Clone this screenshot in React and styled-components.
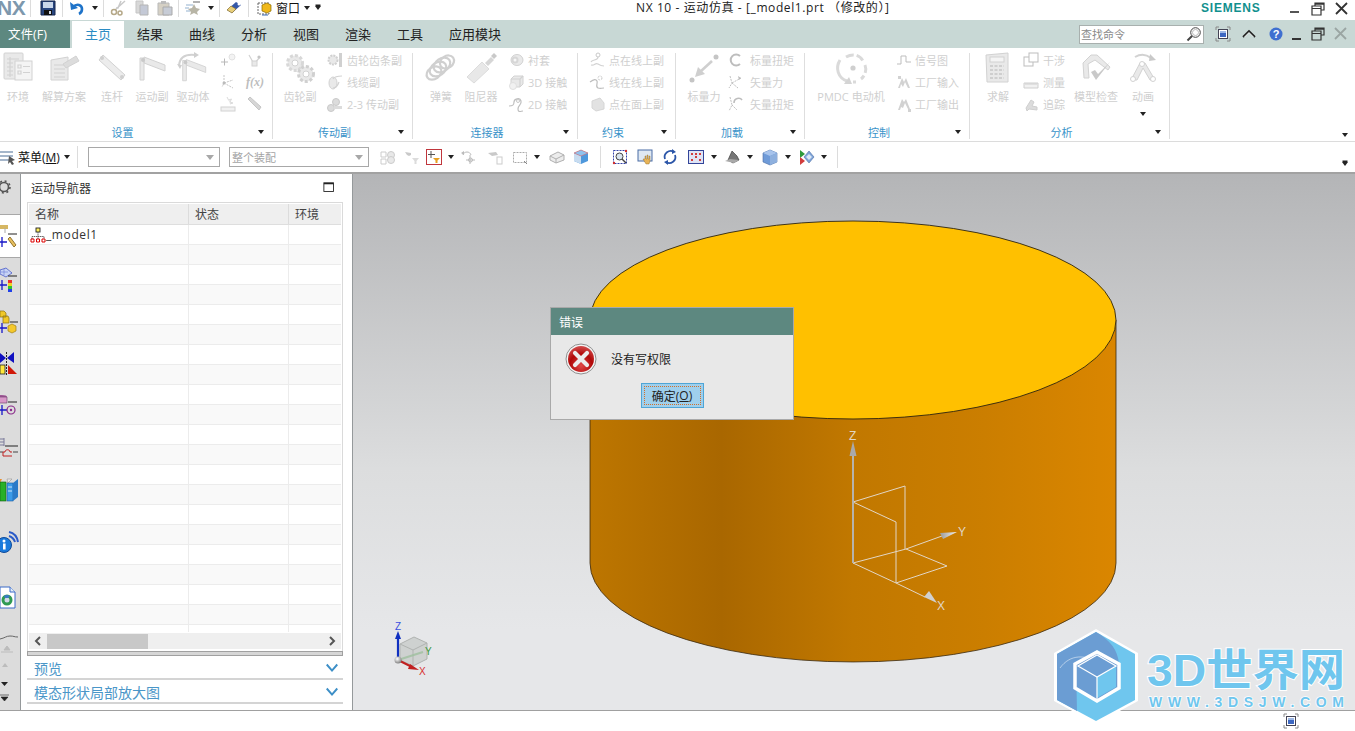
import React from "react";
import styled, { createGlobalStyle } from "styled-components";

const FONT = `"Open Sans", "Noto Sans CJK SC", "Noto Sans", sans-serif`;

const Global = createGlobalStyle`
  html, body { margin: 0; padding: 0; background: #fff; overflow: hidden; }
  * { box-sizing: border-box; }
  #root { width: 1355px; height: 731px; }
`;

/* ---------- icons ---------- */
const F = "#e9e9e9";
const S = "#d2d2d2";
const line = { fill: "none", stroke: S, strokeWidth: 1.2 };
const solid = { fill: F, stroke: S, strokeWidth: 1 };

const arch = (
  <>
    <path d="M4 28V6h4v22zM8 5l21 8v6L8 11z" {...solid} />
    <circle cx="7" cy="8" r="2" fill="#c9c9c9" />
  </>
);

const G = {
  env: (
    <>
      <rect x="2" y="1" width="19" height="26" rx="1" {...solid} />
      <path d="M5 7h12M5 11h6M5 15h6M5 19h6M5 23h6M8 5v20" {...line} />
      <rect x="13" y="9" width="17" height="19" fill="#f4f4f4" stroke={S} />
      <path d="M16 13h3v3h-3zM21 14.500h7M16 19h3v3h-3zM21 20.500h7" {...line} />
    </>
  ),
  solve: (
    <>
      <path d="M3 8l17-3v23l-17 0z" {...solid} />
      <path d="M6 13h11M6 17h11M6 21h11M6 25h11" {...line} />
      <path d="M15 12l13-8 3 5-13 7z" fill="#dcdcdc" stroke={S} />
    </>
  ),
  link: (
    <>
      <path d="M7 3l22 20-4 5L3 8z" fill="#ececec" stroke={S} />
      <circle cx="6" cy="6" r="2" fill="#cfcfcf" />
      <circle cx="26" cy="25" r="2" fill="#cfcfcf" />
    </>
  ),
  joint: arch,
  driver: (
    <>
      <g transform="translate(2 3) scale(.92)">{arch}</g>
      <path d="M2 13C3 5 9 2 18 3" {...line} strokeWidth="2" />
      <path d="M17 0l5 3-5 3zM0 12l5 1-2 4z" fill="#cfcfcf" />
    </>
  ),
  gears: (
    <>
      <circle cx="11" cy="11" r="7.500" fill={F} stroke="#d8d8d8" strokeWidth="3" strokeDasharray="3 2" />
      <circle cx="11" cy="11" r="3" fill="#fff" stroke={S} />
      <circle cx="22" cy="22" r="7.500" fill={F} stroke="#d0d0d0" strokeWidth="3" strokeDasharray="3 2" />
      <circle cx="22" cy="22" r="3" fill="#fff" stroke={S} />
    </>
  ),
  spring: (
    <g fill="none" stroke="#d0d0d0" strokeWidth="2.200">
      <ellipse cx="9" cy="21" rx="8" ry="6" transform="rotate(-35 9 21)" />
      <ellipse cx="13" cy="17" rx="9" ry="6.500" transform="rotate(-35 13 17)" />
      <ellipse cx="17" cy="13" rx="9" ry="6.500" transform="rotate(-35 17 13)" />
      <ellipse cx="22" cy="10" rx="7.500" ry="6" transform="rotate(-35 22 10)" />
    </g>
  ),
  damper: (
    <>
      <path d="M2 25L17 10l7 7L9 31z" fill="#e8e8e8" stroke="#dcdcdc" />
      <path d="M20 11l6-6 3 3-6 6z" fill="#d6d6d6" />
      <path d="M26 4l3-3 3 3-3 3z" fill="#c9c9c9" />
    </>
  ),
  force: (
    <>
      <circle cx="4" cy="28" r="2.500" fill="#c5c5c5" />
      <circle cx="28" cy="5" r="2.500" fill="#c5c5c5" />
      <path d="M24 9L12 20" stroke="#cfcfcf" strokeWidth="2.600" />
      <path d="M7 25l3-10 7 7z" fill="#cfcfcf" />
    </>
  ),
  pmdc: (
    <>
      <path d="M5 8C0 16 3 26 12 29" fill="none" stroke="#dadada" strokeWidth="3" />
      <path d="M9 32l5-7 3 7z" fill="#d4d4d4" />
      <path d="M11 5c7-4 14-2 17 4M30 13c2 5 0 11-4 14M21 30l-3 0" fill="none" stroke="#dadada" strokeWidth="3" strokeDasharray="8 3" />
      <circle cx="18" cy="16" r="2.600" fill="#cfcfcf" />
    </>
  ),
  calc: (
    <>
      <path d="M4 3l22-2v29H5z" {...solid} />
      <rect x="8" y="5" width="14" height="5" fill="#f4f4f4" stroke={S} />
      <path d="M8 14h14M8 18h14M8 22h14M8 26h14" stroke="#cfcfcf" strokeWidth="2" strokeDasharray="3 1.500" />
    </>
  ),
  check: (
    <>
      <path d="M3 11l8-8 6 0 13 12-2 3L15 8 8 12l1 14H4z" {...solid} />
      <path d="M11 20l5 8 14-18-12 12-3-4z" fill="#c9c9c9" />
    </>
  ),
  anim: (
    <>
      <path d="M4 28l9-17 5 0 10 17h-5l-7-12-6 12z" {...solid} />
      <circle cx="6" cy="27" r="2.500" fill="#fff" stroke={S} />
      <circle cx="26" cy="27" r="2.500" fill="#fff" stroke={S} />
      <circle cx="15" cy="12" r="2.500" fill="#fff" stroke={S} />
      <path d="M8 5c5-3 11-3 16 1" {...line} strokeWidth="2" />
      <path d="M23 2l6 6-7 1z" fill="#c9c9c9" />
    </>
  ),
};

const g = {
  plusBulb: (
    <>
      <path d="M1 10h7M4.500 6.500v7" stroke="#b9b9b9" strokeWidth="1" />
      <circle cx="12" cy="5" r="3" fill="#f3f3f3" stroke="#e2e2e2" />
    </>
  ),
  nodes: (
    <>
      <path d="M3 3l5 9 6-7" {...line} />
      <rect x="6" y="9" width="5" height="5" {...solid} />
      <circle cx="13" cy="5" r="1.600" fill="#c5c5c5" />
    </>
  ),
  axes: (
    <>
      <path d="M4 1v8l-2 4M4 9l9-3M4 9l9 5" fill="none" stroke="#c5c5c5" strokeDasharray="2 1" />
      <circle cx="4" cy="9" r="1.500" fill="#bbb" />
    </>
  ),
  fx: (
    <text x="0" y="12" fontFamily="'Liberation Serif', serif" fontStyle="italic" fontWeight="700" fontSize="12" fill="#bdbdbd">f(x)</text>
  ),
  ruler: (
    <>
      <path d="M7 1l1.500 3 3-1-1.500 3 3 1-3 1" fill="#ededed" stroke="#dcdcdc" />
      <rect x="1" y="11" width="14" height="4" fill="#f1f1f1" stroke={S} />
    </>
  ),
  rod: <path d="M2 3l2-2 11 10-2 3z" fill="#d6d6d6" stroke="#c5c5c5" />,
  rack: (
    <>
      <circle cx="6" cy="8" r="4.500" fill={F} stroke="#d0d0d0" strokeWidth="2" strokeDasharray="2 1" />
      <rect x="12" y="1" width="3" height="14" fill="#d0d0d0" />
    </>
  ),
  cable: (
    <>
      <ellipse cx="6" cy="9" rx="4" ry="6" fill={F} stroke={S} />
      <path d="M6 5C8 2 12 2 15 2M6 14c3 0 5-3 6-6" {...line} />
    </>
  ),
  couple: (
    <>
      <circle cx="4" cy="12" r="3.500" fill="#dcdcdc" stroke="#c9c9c9" />
      <circle cx="9" cy="6" r="3.500" fill="#dcdcdc" stroke="#c9c9c9" />
      <rect x="7" y="10" width="8" height="3" fill="#dcdcdc" />
    </>
  ),
  bushing: (
    <>
      <ellipse cx="9" cy="8" rx="6" ry="5.500" fill={F} stroke={S} />
      <circle cx="7" cy="8" r="3.500" fill="#d6d6d6" />
      <circle cx="7" cy="8" r="1.500" fill="#f7f7f7" />
    </>
  ),
  c3d: (
    <>
      <path d="M3 5l3-3h9v8l-3 3H3z" {...solid} />
      <path d="M3 5h9v8M12 5l3-3" {...line} />
      <circle cx="5" cy="12" r="3.500" fill="#f1f1f1" stroke="#e0e0e0" />
    </>
  ),
  c2d: (
    <>
      <path d="M1 10c4 0 5-1 5-4s6-5 7-1-3 4-3 8 3 2 5 2" {...line} stroke="#bdbdbd" />
      <circle cx="10" cy="5" r="1.500" fill="none" stroke="#c9c9c9" />
    </>
  ),
  ptLine: (
    <>
      <circle cx="9" cy="3" r="2" fill="none" stroke="#c9c9c9" />
      <path d="M9 5c0 4-6 2-7 5M2 13c4 1 4-3 7-1s4 2 6 2" {...line} />
    </>
  ),
  lineLine: (
    <>
      <circle cx="11" cy="4" r="2" fill="none" stroke="#c9c9c9" strokeDasharray="2 1" />
      <path d="M1 8c4-3 6-3 7-1s-2 6 1 7 3 0 6 0" {...line} stroke="#bdbdbd" />
    </>
  ),
  ptFace: <path d="M3 5l8-3 4 5v6l-8 2-4-3z" fill="#e2e2e2" stroke="#d6d6d6" />,
  scalarT: <path d="M13 4A5.500 5.500 0 1 0 13 12" fill="none" stroke="#bdbdbd" strokeWidth="2" />,
  vecF: (
    <>
      <path d="M3 2l2 7-3 5M5 9l9-5M5 9l6 5" fill="none" stroke="#c0c0c0" strokeDasharray="2 1" />
      <path d="M11 2l3 2-2 2z" fill="#bbb" />
    </>
  ),
  vecT: (
    <>
      <path d="M3 1l2 8-3 6M5 9l5 5" fill="none" stroke="#c0c0c0" strokeDasharray="2 1" />
      <path d="M7 7c0-5 6-6 8-3" {...line} stroke="#bdbdbd" strokeWidth="1.600" />
    </>
  ),
  signal: <path d="M1 12h4V4h5v6h5" fill="none" stroke="#bdbdbd" />,
  plantIn: <path d="M2 14l4-10 2 4 2-4 4 10h-2l-3-6-2 5-2-3-1 4zM2 2h3v3H2z" fill="#d2d2d2" />,
  plantOut: <path d="M2 14l4-11 2 3 2-3 4 10h-2l-3-6-2 5-2-1-1 3zM12 13h3v3h-3z" fill="#d2d2d2" />,
  overlap: (
    <>
      <rect x="1" y="5" width="9" height="9" fill="#fff" stroke="#bdbdbd" />
      <rect x="6" y="1" width="9" height="9" fill="#fff" stroke="#bdbdbd" />
    </>
  ),
  measure: <path d="M1 9h14v5H1zM3 9v2M5 9v2M7 9v2M9 9v2M11 9v2M13 9v2" fill="#f1f1f1" stroke="#cfcfcf" />,
  trace: <path d="M3 12l5-8 3 2-2 4 5 1v3l-8-1-2 2z" fill="#dcdcdc" stroke="#cfcfcf" />,
  /* title bar */
  save: (
    <>
      <path d="M1 1h14v14H1z" fill="#27457f" stroke="#16264d" />
      <path d="M3 2h10v6H3z" fill="#c9d7ea" />
      <rect x="4" y="10" width="8" height="5" fill="#111" />
      <rect x="9" y="11" width="2" height="3" fill="#cfd8e6" />
    </>
  ),
  undo: (
    <>
      <path d="M4 7c4-4 9-2 9 2 0 2-1 4-3 5" fill="none" stroke="#1e73c9" strokeWidth="2.600" />
      <path d="M1 2l1 8 7-2z" fill="#1e73c9" />
    </>
  ),
  cut: (
    <>
      <path d="M15 1L5 10M11 1L8 8l-2 0" stroke="#c9c9c9" strokeWidth="1.500" fill="none" />
      <circle cx="4" cy="12" r="2.500" fill="none" stroke="#b5a888" strokeWidth="1.500" />
      <circle cx="10" cy="13" r="2" fill="none" stroke="#b5a888" strokeWidth="1.500" />
    </>
  ),
  copy: (
    <>
      <path d="M2 1h7v12H2z" fill="#d8d8d8" stroke="#c5c5c5" />
      <path d="M6 5h8v10H6z" fill="#c4c9d6" stroke="#b5b5b5" />
    </>
  ),
  paste: (
    <>
      <path d="M1 3h11v12H1z" fill="#d5d0c4" stroke="#b9b9b9" />
      <rect x="4" y="1" width="5" height="3" fill="#bbb" />
      <path d="M6 7h9v8H6z" fill="#c7ccd6" stroke="#aaa" />
    </>
  ),
  star: (
    <>
      <path d="M9 4l2 4 4 1-3 3 1 3-4-2-4 2 1-3-3-3 4-1z" fill="#b8b5a6" />
      <path d="M1 5h7M0 8h4M1 11h4" stroke="#b8cbe0" strokeWidth="1.500" />
      <path d="M8 2h7" stroke="#999" strokeWidth="1.500" />
    </>
  ),
  eraser: (
    <>
      <path d="M1 10l9-8 5 3-9 8z" fill="#3558a8" />
      <path d="M1 10l4-4 5 3-4 4z" fill="#e8cf7a" stroke="#8a6a20" strokeWidth=".6" />
      <circle cx="13" cy="4" r="1.500" fill="#fff" />
    </>
  ),
  wnd: (
    <>
      <path d="M2 3h11v11H2z" fill="#fff" stroke="#666" strokeDasharray="2 1" />
      <path d="M6 5l5-2 4 2v6l-4 2-5-2z" fill="#f0b81a" stroke="#8a6a00" strokeWidth=".7" />
      <path d="M6 15h6" stroke="#3a6ab8" />
    </>
  ),
  /* toolbar */
  menu: (
    <>
      <path d="M0 3h13M0 7h13M0 11h10" stroke="#4c6e96" strokeWidth="1.200" />
      <path d="M9 7l6 4-3 1 2 3-2 1-2-3-2 2z" fill="#555" />
    </>
  ),
  asm: (
    <>
      <path d="M1 3h5v5H1zM1 10h5v5H1z" fill="none" stroke="#ccc" />
      <circle cx="11" cy="6" r="3.500" fill="#e8e8e8" stroke="#ccc" />
      <circle cx="11" cy="11" r="3.500" fill="#e8e8e8" stroke="#ccc" />
    </>
  ),
  wrench: (
    <>
      <path d="M1 3l6 1v2l-2 1-2-1z" fill="#c9c9c9" />
      <path d="M8 9h7l-2.500 3v3h-2v-3z" fill="#dcdcdc" />
    </>
  ),
  redFilter: (
    <>
      <rect x=".5" y=".5" width="15" height="15" fill="#fff" stroke="#c0363c" />
      <path d="M5 2v7M2 5.500h7" stroke="#555" />
      <path d="M7 9h7l-2.500 2.500V14h-2v-2.500z" fill="#e8a020" />
    </>
  ),
  rot: (
    <>
      <path d="M3 6c1-4 7-4 8 0" fill="none" stroke="#bbb" />
      <path d="M1 4l3-2v4z" fill="#bbb" />
      <path d="M10 6v9M6 11h9" stroke="#bbb" />
      <circle cx="10.500" cy="11" r="2" fill="none" stroke="#bbb" />
    </>
  ),
  chain: (
    <>
      <path d="M1 4l8-1 2 3-6 1z" fill="#c9c9c9" />
      <rect x="10" y="8" width="5" height="7" fill="none" stroke="#ccc" />
    </>
  ),
  marquee: (
    <>
      <rect x="1.500" y="3.500" width="13" height="10" fill="none" stroke="#aaa" strokeDasharray="2 1" />
      <path d="M12 12l3 3" stroke="#888" />
    </>
  ),
  wire: (
    <>
      <path d="M1 7l8-4 6 3v5l-8 3-6-3z" fill="#ececec" stroke="#b0b0b0" />
      <path d="M1 7l6 3 8-4M7 10v4" fill="none" stroke="#b0b0b0" />
    </>
  ),
  cubeSel: (
    <>
      <path d="M1 4l7-3 7 3v8l-7 3-7-3z" fill="#4e98dc" />
      <path d="M1 4l7 3v8l-7-3z" fill="#c8dcf0" />
      <path d="M8 7l7-3-7-3-7 3z" fill="#8fc2ee" stroke="#e06a6a" strokeWidth=".6" />
    </>
  ),
  zoomBox: (
    <>
      <rect x="1.500" y="1.500" width="13" height="13" fill="#fff" stroke="#3040a8" strokeDasharray="2 1" />
      <circle cx="7.500" cy="7.500" r="3.500" fill="#d8e4f0" stroke="#444" />
      <path d="M10 10l4 4" stroke="#444" strokeWidth="1.500" />
      <circle cx="14" cy="2" r="1.200" fill="#d03030" />
      <circle cx="2" cy="14" r="1.200" fill="#d03030" />
    </>
  ),
  pan: (
    <>
      <rect x="1" y="1" width="14" height="11" fill="#dfe8f2" stroke="#4a6da5" />
      <path d="M9 15l-3-5 2 0V7h1v3h1V6h1v4h1V7h1v5l-1 3z" fill="#e8b458" stroke="#8a6420" strokeWidth=".4" />
    </>
  ),
  rotate: (
    <>
      <path d="M3 10A6 6 0 0 1 12 3" fill="none" stroke="#2c56a8" strokeWidth="1.800" />
      <path d="M13 6A6 6 0 0 1 4 13" fill="none" stroke="#2c56a8" strokeWidth="1.800" />
      <path d="M10 0l4 3-4 2zM6 16l-4-3 4-2z" fill="#2c56a8" />
    </>
  ),
  fit: (
    <>
      <rect x=".5" y="1.500" width="15" height="13" fill="#dfe4f5" stroke="#33459a" />
      <path d="M3 4h2v2H3zM7 4h2v2H7zM11 4h2v2h-2zM3 10h2v2H3zM7 7h2v2H7zM11 10h2v2h-2z" fill="#d23c3c" />
    </>
  ),
  shade: (
    <>
      <path d="M4 11l4-9 5 5 2 4-6 3z" fill="#777" stroke="#333" strokeWidth=".6" />
      <path d="M1 12l5-2 9 1-5 3z" fill="#a9a9a9" />
    </>
  ),
  cubeBlue: (
    <>
      <path d="M1 4l7-3 7 3v9l-7 3-7-3z" fill="#6f9bd8" stroke="#4a6da5" strokeWidth=".6" />
      <path d="M1 4l7 3 7-3-7-3z" fill="#a8c4ec" />
      <path d="M8 7v9l7-3V4z" fill="#8eb0de" />
    </>
  ),
  views: (
    <>
      <path d="M2 1l5 4-5 4z" fill="#2f9a3c" />
      <path d="M2 8l5 4-5 4z" fill="#d23c3c" />
      <path d="M6 8l5-6 5 6-5 6z" fill="#7fa4d8" stroke="#4a6da5" strokeWidth=".6" />
      <path d="M8 8l3-3 3 3-3 3z" fill="#dce8f6" />
    </>
  ),
  /* misc */
  loupe: (
    <>
      <circle cx="9.500" cy="6.500" r="4.800" fill="#fff" stroke="#444" />
      <circle cx="9.500" cy="6.500" r="3" fill="none" stroke="#bbb" />
      <path d="M6 10l-4.500 4.500" stroke="#444" strokeWidth="2" />
    </>
  ),
  frame: (
    <>
      <path d="M1 4V1h3M12 1h3v3M15 12v3h-3M4 15H1v-3" fill="none" stroke="#888" />
      <rect x="3.500" y="3.500" width="9" height="9" fill="#fff" stroke="#445" />
      <rect x="5" y="5" width="6" height="6" fill="#3d68c2" />
      <rect x="5" y="5" width="6" height="2" fill="#9db8e6" />
    </>
  ),
  collapse: (
    <>
      <path d="M2 11l6-6 6 6" fill="none" stroke="#222" strokeWidth="1.800" />
      <path d="M3.500 11L8 6.500 12.500 11" fill="none" stroke="#fff" strokeWidth=".8" />
    </>
  ),
  min: <rect x="4" y="12" width="9" height="2" fill="#333" />,
  minGrey: <rect x="4" y="10" width="9" height="2" fill="#555" />,
  restore: (
    <path d="M5 5V2h9v7h-3M2 5h9v9H2zM2 7.500h9M5 3.200h9" fill="none" stroke="#333" strokeWidth="1.200" />
  ),
  close: <path d="M2 2l11 11M13 2L2 13" stroke="#333" strokeWidth="1.800" />,
  closeOff: <path d="M2 2l11 11M13 2L2 13" stroke="#9aa5a3" strokeWidth="1.800" />,
  maximize: (
    <>
      <rect x="1" y="2" width="11" height="10" fill="#fff" stroke="#222" />
      <path d="M1 3h11" stroke="#222" strokeWidth="1.500" />
    </>
  ),
  mech: (
    <>
      <rect x="6" y="1" width="4" height="4" fill="#ffef5a" stroke="#222" strokeWidth=".9" />
      <path d="M8 5v4M2 12V9.500h12V12M8 9v3" fill="none" stroke="#555" strokeWidth=".9" strokeDasharray="1.500 .6" />
      <path d="M1 12h3v3H1zM6.500 12h3v3h-3zM12 12h3v3h-3z" fill="#fff" stroke="#d00" />
    </>
  ),
  chev: <path d="M2 4l6 7 6-7" fill="none" stroke="#3d8fc7" strokeWidth="2.200" />,
};

const Svg = styled.svg`
  display: block;
  flex: none;
  overflow: visible;
  margin-left: ${(p) => p.$ml || 0}px;
  margin-top: ${(p) => p.$mt || 0}px;
`;

const Big = ({ n }) => (
  <Svg width="32" height="32" viewBox="0 0 32 32">{G[n]}</Svg>
);
const Ico = ({ n, ml, size = 16 }) => (
  <Svg width={size} height={size} viewBox="0 0 16 16" $ml={ml}>{g[n]}</Svg>
);

/* ---------- title row ---------- */
const Page = styled.div`
  width: 1355px;
  height: 731px;
  display: flex;
  flex-direction: column;
  font-family: ${FONT};
  font-size: 12px;
  color: #222;
  background: #fff;
  overflow: hidden;
`;
const TitleRow = styled.div`
  height: 20px;
  flex: none;
  display: flex;
  align-items: center;
`;
const Quick = styled.div`
  width: 636px;
  flex: none;
  height: 15px;
  align-self: flex-start;
  display: flex;
  align-items: center;
`;
const NxLogo = styled.div`
  width: 30px;
  height: 15px;
  flex: none;
  overflow: hidden;
  font: 700 21px/15px "Liberation Sans", sans-serif;
  color: #7d98ad;
  letter-spacing: -0.5px;
  text-indent: -3px;
`;
const VSep = styled.i`
  flex: none;
  width: 1px;
  height: ${(p) => p.$h || 18}px;
  background: #dcdcdc;
  margin-left: ${(p) => p.$ml || 0}px;
`;
const Caret = styled.i`
  flex: none;
  width: 0;
  height: 0;
  border-left: 3px solid transparent;
  border-right: 3px solid transparent;
  border-top: 4px solid #222;
  margin-left: ${(p) => p.$ml || 0}px;
  margin-right: 1px;
`;
const MenuCaret = styled(Caret)`
  box-shadow: 0 -2px 0 -0.5px #222;
`;
const QuickText = styled.span`
  margin-left: ${(p) => p.$ml || 0}px;
  font-size: 12px;
  color: #111;
`;
const Title = styled.div`
  font-size: 12px;
  color: #222;
  white-space: pre;
  margin-top: -6px;
  letter-spacing: 0.6px;
`;
const Siemens = styled.div`
  margin-left: auto;
  width: 62px;
  font: 700 12px "Liberation Sans", sans-serif;
  color: #11908e;
  letter-spacing: 0.8px;
  margin-top: -5px;
  white-space: nowrap;
`;
const WinControls = styled.div`
  display: flex;
  align-items: center;
  width: 92px;
  margin-top: -2px;
`;

/* ---------- tabs ---------- */
const TabBar = styled.div`
  height: 28px;
  flex: none;
  display: flex;
  align-items: stretch;
  background: #c8d8d5;
`;
const FileTab = styled.div`
  width: 70px;
  background: #5d8880;
  color: #fff;
  font-size: 12.500px;
  display: flex;
  align-items: center;
  padding: 0 0 2px 8px;
  margin-right: 2px;
`;
const Tab = styled.div`
  width: ${(p) => p.$w || 52}px;
  display: flex;
  align-items: center;
  justify-content: center;
  padding-bottom: 2px;
  font-size: 13px;
  color: ${(p) => (p.$active ? "#2b8cc4" : "#222")};
  background: ${(p) => (p.$active ? "#fff" : "transparent")};
  margin-top: ${(p) => (p.$active ? 1 : 0)}px;
`;
const SearchBox = styled.div`
  margin-left: auto;
  width: 125px;
  height: 19px;
  align-self: center;
  background: #fff;
  border: 1px solid #a8b0ae;
  display: flex;
  align-items: center;
  justify-content: space-between;
  padding: 0 1px 0 1px;
  font-size: 11px;
  color: #8a8a8a;
`;
const TabTools = styled.div`
  display: flex;
  align-items: center;
  width: 151px;
`;

/* ---------- ribbon ---------- */
const Ribbon = styled.div`
  height: 94px;
  flex: none;
  display: flex;
  border-bottom: 1px solid #dcdcdc;
`;
const Group = styled.div`
  width: ${(p) => p.$w}px;
  flex: none;
  display: flex;
  flex-direction: column;
  padding-top: 1px;
  position: relative;
  &::after {
    content: "";
    position: absolute;
    right: 0;
    top: 5px;
    bottom: 2px;
    width: 1px;
    background: #dedede;
  }
`;
const GroupBody = styled.div`
  height: 75px;
  display: flex;
  align-items: flex-start;
  padding-left: ${(p) => p.$pl || 0}px;
`;
const GroupFoot = styled.div`
  flex: 1;
  display: flex;
  align-items: center;
  padding-right: ${(p) => (p.$trail || 18) - 1}px;
  position: relative;
`;
const GroupLabel = styled.div`
  flex: 1;
  text-align: center;
  font-size: 11px;
  color: #3a93c9;
  line-height: 14px;
`;
const FootCaret = styled(Caret)`
  position: absolute;
  right: 8px;
  top: 6px;
`;
const LargeBtn = styled.div`
  width: ${(p) => p.$w}px;
  margin-left: ${(p) => p.$ml || 0}px;
  flex: none;
  display: flex;
  flex-direction: column;
  align-items: center;
  padding-top: 3px;
  color: #cfcfcf;
  font-size: 11px;
  line-height: 14px;
  white-space: nowrap;
  & > span {
    margin-top: 6px;
  }
`;
const LargeCaret = styled(Caret)`
  margin-top: 8px;
`;
const SmallCol = styled.div`
  flex: none;
  display: flex;
  flex-direction: column;
  margin-left: ${(p) => p.$ml || 0}px;
`;
const SmallRow = styled.div`
  height: 22px;
  display: flex;
  align-items: center;
  gap: ${(p) => (p.$gap === undefined ? 4 : p.$gap)}px;
  color: #cfcfcf;
  font-size: 11px;
  white-space: nowrap;
`;
const RibbonRest = styled.div`
  flex: 1;
  display: flex;
  align-items: flex-end;
  justify-content: flex-end;
  padding: 0 6px 4px 0;
`;

/* ---------- toolbar ---------- */
const Toolbar = styled.div`
  height: 32px;
  flex: none;
  display: flex;
  align-items: center;
  border-bottom: 2px solid #a2a2a2;
  position: relative;
`;
const MenuLabel = styled.span`
  margin-left: ${(p) => p.$ml || 0}px;
  font-size: 12px;
  color: #111;
  u {
    text-underline-offset: 1px;
  }
`;
const Combo = styled.div`
  width: ${(p) => p.$w}px;
  height: 20px;
  margin-left: ${(p) => p.$ml}px;
  flex: none;
  border: 1px solid #a8a8a8;
  background: #fff;
  display: flex;
  align-items: center;
  justify-content: space-between;
  padding: 0 5px 0 2px;
  font-size: 11px;
  color: #a4a4a4;
`;
const GreyCaret = styled(Caret)`
  border-top-color: #a8a8a8;
  border-left-width: 4px;
  border-right-width: 4px;
  border-top-width: 5px;
  margin-right: 0;
`;
const EndCaret = styled(MenuCaret)`
  position: absolute;
  right: 6px;
  bottom: 6px;
`;

/* ---------- main ---------- */
const Main = styled.div`
  height: 537px;
  flex: none;
  display: flex;
  border-bottom: 1px solid #a0a0a0;
`;
const Strip = styled.div`
  width: 21px;
  flex: none;
  display: flex;
  flex-direction: column;
  overflow: hidden;
  background: #dcdcdc;
  border-right: 1px solid #95999b;
`;
const GearTab = styled.div`
  height: 41px;
  flex: none;
  padding-top: 5px;
  background: #dcdcdc;
  border-bottom: 1px solid #a8a8a8;
`;
const ActiveTab = styled.div`
  height: 43px;
  flex: none;
  margin-right: -1px;
  background: #fff;
  border-bottom: 1px solid #a8a8a8;
  padding-top: 9px;
`;
const StripList = styled.div`
  flex: 1;
  display: flex;
  flex-direction: column;
`;

const Panel = styled.div`
  width: 332px;
  flex: none;
  display: flex;
  flex-direction: column;
  background: #fff;
  border-right: 1px solid #95999b;
  padding: 0 9px 6px 6px;
`;
const PanelTitle = styled.div`
  height: 28px;
  flex: none;
  display: flex;
  align-items: center;
  justify-content: space-between;
  padding: 0 6px 0 4px;
  font-size: 12px;
  color: #333;
`;
const TableBox = styled.div`
  height: 449px;
  flex: none;
  border: 1px solid #dadada;
  border-bottom: none;
  padding: 1px;
  display: flex;
  flex-direction: column;
`;
const Row = styled.div`
  display: grid;
  grid-template-columns: 160px 100px 1fr;
  height: ${(p) => (p.$head ? 21 : 20)}px;
  flex: none;
  background: ${(p) => (p.$head ? "#efefef" : p.$shade ? "#f9f9f9" : "#fff")};
  border-bottom: 1px solid ${(p) => (p.$head ? "#dedede" : "#ececec")};
`;
const Cell = styled.div`
  border-right: 1px solid ${(p) => (p.$head ? "#dcdcdc" : "#ececec")};
  padding-left: ${(p) => (p.$tree ? 1 : 6)}px;
  display: flex;
  align-items: center;
  gap: 0;
  color: ${(p) => (p.$head ? "#444" : "#333")};
  font-size: 12px;
  letter-spacing: ${(p) => (p.$tree ? "0.6px" : "0")};
  &:last-child {
    border-right: none;
  }
`;
const Rows = styled.div`
  flex: 1;
  overflow: hidden;
`;
const HScroll = styled.div`
  height: 16px;
  flex: none;
  margin: 1px 0;
  background: #efefef;
  display: flex;
  align-items: center;
  justify-content: space-between;
  padding: 0 5px 0 5px;
`;
const Thumb = styled.div`
  width: 101px;
  height: 15px;
  background: #c8c8c8;
  margin-left: 5px;
  margin-right: auto;
`;
const Splitter = styled.div`
  height: 5px;
  flex: none;
  background: #d6d6d6;
  border: 1px solid #a0a0a0;
`;
const Fold = styled.div`
  height: 24px;
  flex: none;
  display: flex;
  align-items: center;
  justify-content: space-between;
  padding: 1px 4px 0 7px;
  border-bottom: 2px solid #d4d4d4;
  font-size: 14px;
  color: #4a96c8;
`;

/* ---------- viewport ---------- */
const Viewport = styled.div`
  flex: 1;
  position: relative;
  z-index: 2;
  background: linear-gradient(#b4b5b7 0%, #dcddde 55%, #e6e7e9 85%, #e6e7e9 100%);
`;
const Scene = styled.svg`
  position: absolute;
  left: 0;
  top: 0;
  width: 1002px;
  height: 537px;
  overflow: visible;
`;
const Dialog = styled.div`
  position: absolute;
  left: 197px;
  top: 133px;
  width: 244px;
  height: 113px;
  background: #e8e8e8;
  border: 1px solid #a9a9a9;
  display: flex;
  flex-direction: column;
`;
const DialogHead = styled.div`
  height: 27px;
  flex: none;
  background: #5d8880;
  color: #fff;
  font-size: 12px;
  display: flex;
  align-items: center;
  padding-left: 8px;
`;
const DialogBody = styled.div`
  display: flex;
  align-items: center;
  gap: 14px;
  padding: 8px 0 0 14px;
  font-size: 12px;
  color: #222;
`;
const DialogFoot = styled.div`
  display: flex;
  justify-content: center;
  padding-top: 8px;
`;
const OkButton = styled.div`
  width: 63px;
  height: 25px;
  background: #9fcfec;
  border: 1px solid #4fa5d6;
  padding: 2px;
  color: #222;
  font-size: 12px;
  & > span {
    display: flex;
    width: 100%;
    height: 100%;
    align-items: center;
    justify-content: center;
    border: 1px dotted #d2702a;
  }
`;
const StatusBar = styled.div`
  flex: 1;
  display: flex;
  align-items: center;
  justify-content: flex-end;
  padding-right: 56px;
`;

/* ---------- strip pictures ---------- */
const Strip1 = () => (
  <Svg width="20" height="24" viewBox="0 0 20 24">
    <path d="M0 2h8M0 4h8" stroke="#c9a030" strokeWidth="1.500" />
    <path d="M5 4v5" stroke="#aaa" />
    <path d="M8 10h9" stroke="#222" />
    <path d="M0 18h7M2 13v10" stroke="#1818c8" strokeWidth="1.300" />
    <path d="M8 15l2-2 6 8-2 2z" fill="#e8c060" stroke="#7a5a10" strokeWidth=".8" />
  </Svg>
);
const Strip2 = () => (
  <Svg width="20" height="26" viewBox="0 0 20 26" $mt={9}>
    <path d="M0 3l6-2 6 5-6 4-6-3z" fill="#c8d4f4" stroke="#4a5ac8" strokeWidth=".8" />
    <path d="M0 5h8M4 2v6" stroke="#6a7ad8" strokeWidth=".6" />
    <path d="M8 9h9" stroke="#222" />
    <path d="M0 18h7M2 13v10" stroke="#1818c8" strokeWidth="1.300" />
    <rect x="8" y="13" width="4" height="3" fill="#e83030" />
    <rect x="8" y="16" width="4" height="3" fill="#f0d020" />
    <rect x="8" y="19" width="4" height="3" fill="#30c030" />
    <rect x="8" y="22" width="4" height="3" fill="#2040e8" />
  </Svg>
);
const Strip3 = () => (
  <Svg width="20" height="24" viewBox="0 0 20 24" $mt={17}>
    <path d="M0 1h4l2 2v4H0zM3 6h5l1 2v5H3z" fill="#f0c828" stroke="#8a7010" strokeWidth=".7" />
    <path d="M10 12h8" stroke="#222" />
    <path d="M0 18h7M2 13v10" stroke="#1818c8" strokeWidth="1.300" />
    <path d="M8 16l4-2 4 2v5l-4 2-4-2z" fill="#f4c82c" stroke="#a08010" strokeWidth=".7" />
  </Svg>
);
const Strip4 = () => (
  <Svg width="20" height="24" viewBox="0 0 20 24" $mt={18}>
    <path d="M0 1l6 5-6 5zM14 0v11L7 6z" fill="#1010c0" />
    <path d="M6.500 0v24" stroke="#222" strokeDasharray="2 1" />
    <rect x="0" y="13" width="5" height="9" fill="#ffe83c" stroke="#222" strokeWidth=".8" />
    <path d="M8 13l9 9H8z" fill="#d01808" />
  </Svg>
);
const Strip5 = () => (
  <Svg width="20" height="24" viewBox="0 0 20 24" $mt={18}>
    <ellipse cx="2" cy="3" rx="5" ry="2" fill="#a05a98" />
    <path d="M-3 3h10v6H-3z" fill="#d898c8" stroke="#6a3a68" strokeWidth=".6" />
    <path d="M8 8h9" stroke="#222" />
    <path d="M0 16h7M2 11v10" stroke="#1818c8" strokeWidth="1.300" />
    <circle cx="11" cy="16" r="4" fill="none" stroke="#8a2a8a" strokeWidth="1.200" />
    <circle cx="11" cy="16" r="1.200" fill="#8a2a8a" />
  </Svg>
);
const Strip6 = () => (
  <Svg width="20" height="24" viewBox="0 0 20 24" $mt={18}>
    <path d="M0 3h4M0 6h4M0 9h4M4 2v8" stroke="#7a7a9a" />
    <path d="M5 10h13" stroke="#222" />
    <path d="M0 16h3M13 16h5" stroke="#444" />
    <path d="M3 20v-4h2c0-3 5-3 5 0h2" fill="none" stroke="#c02020" />
    <path d="M3 20h9" stroke="#c02020" />
  </Svg>
);
const Strip7 = () => (
  <Svg width="20" height="24" viewBox="0 0 20 24" $mt={18}>
    <path d="M0 1h2l-2 4z" fill="#e89030" />
    <rect x="0" y="4" width="6" height="19" fill="#28b028" stroke="#0f600f" strokeWidth=".6" />
    <path d="M7 1h5l-4 4z" fill="#e8e8e8" stroke="#888" strokeWidth=".5" />
    <rect x="7" y="5" width="6" height="18" fill="#3a9ae8" stroke="#1a5aa0" strokeWidth=".6" />
    <path d="M13 5l5-4v18l-5 4z" fill="#2a7ac8" />
    <path d="M8 9h4M8 13h4" stroke="#cfe4f8" />
  </Svg>
);
const Strip8 = () => (
  <Svg width="20" height="26" viewBox="0 0 20 26" $mt={28}>
    <path d="M9 2c5 1 8 4 9 10M9 6c3 1 5 3 6 6" fill="none" stroke="#2a5ac8" strokeWidth="2" />
    <circle cx="4" cy="15" r="7.500" fill="#1a7adc" stroke="#0f4a9a" />
    <circle cx="4" cy="11" r="1.500" fill="#fff" />
    <rect x="3" y="13.500" width="2.600" height="6" fill="#fff" />
  </Svg>
);
const Strip9 = () => (
  <Svg width="20" height="24" viewBox="0 0 20 24" $mt={30}>
    <path d="M0 1h10l5 5v16H0z" fill="#fff" stroke="#3a6ac8" />
    <path d="M10 1v5h5" fill="#e4eef8" stroke="#3a6ac8" />
    <circle cx="7" cy="14" r="5.500" fill="#2f9a52" />
    <circle cx="7" cy="14" r="2.500" fill="#d0d8e8" />
    <path d="M4 10a5 5 0 0 1 6 0l-2 2H5z" fill="#3a7ac8" />
  </Svg>
);
const StripTools = () => (
  <Svg width="20" height="68" viewBox="0 0 20 68" $mt={24}>
    <path d="M0 5c5-1 6-3 10-3s4 1 8 1" fill="none" stroke="#666" />
    <path d="M4 16l3-4 3 4zM1 18h12" fill="#bcbcbc" stroke="#bcbcbc" />
    <path d="M2 34l3-4 3 4z" transform="translate(0 -1)" fill="#bcbcbc" />
    <path d="M1 48h7l-3.500 4z" fill="#222" />
    <path d="M0 61h9M1 63h7l-3.500 4z" fill="#222" stroke="#222" strokeWidth=".6" />
  </Svg>
);

/* ---------- 3D scene ---------- */
const Scene3D = () => (
  <Scene viewBox="353 174 1002 537">
    <defs>
      <linearGradient id="body" gradientUnits="userSpaceOnUse" x1="590" x2="1116" y1="0" y2="0">
        <stop offset="0" stopColor="#bd7600" />
        <stop offset="0.25" stopColor="#a96700" />
        <stop offset="0.5" stopColor="#c17800" />
        <stop offset="0.75" stopColor="#cb7e00" />
        <stop offset="1" stopColor="#da8600" />
      </linearGradient>
      <linearGradient id="cone" x1="0" x2="1" y1="0" y2="0">
        <stop offset="0" stopColor="#9a9a9a" />
        <stop offset="1" stopColor="#f4f4f4" />
      </linearGradient>
      <radialGradient id="ball" cx=".4" cy=".35" r=".7">
        <stop offset="0" stopColor="#fff" />
        <stop offset="1" stopColor="#777" />
      </radialGradient>
    </defs>
    <path d="M590 320V563A263 99 0 0 0 1116 563V320Z" fill="url(#body)" stroke="#3a2a10" strokeWidth=".8" />
    <ellipse cx="853" cy="320" rx="263" ry="99" fill="#ffc000" stroke="#2c2410" strokeWidth=".9" />

    <g fill="none" stroke="#e2d6c6" strokeWidth="1">
      <path d="M853 563L896 583L947 566L906 549L853 563" />
      <path d="M853 502L905 486V549" />
      <path d="M853 502L896 522V583" />
      <path d="M906 549L942 536M896 583L925 597" />
    </g>
    <path d="M853 563V452" stroke="#b6b3ad" strokeWidth="2" />
    <path d="M853 441l-3.500 15h7z" fill="#a9a9ab" />
    <path d="M957 532l-17 1 3 6z" fill="url(#cone)" />
    <path d="M937 603l-8-12-5 6z" fill="#d0d0d0" />
    <g fontFamily="'Liberation Sans', sans-serif" fontSize="12" fill="#e2d6c6">
      <text x="849" y="440">Z</text>
      <text x="958" y="536">Y</text>
      <text x="937" y="610">X</text>
    </g>

    <g>
      <path d="M400 644l14-7 13 6v16l-14 7-13-6z" fill="#c6c9c7" fillOpacity=".75" stroke="#b0b3b1" />
      <path d="M400 644l13 6 14-7M413 650v16" fill="none" stroke="#b0b3b1" />
      <path d="M398 660l25-8" stroke="#9fc09f" strokeWidth="2" opacity=".8" />
      <path d="M398 658V636" stroke="#1030c0" strokeWidth="2.200" />
      <path d="M398 631l-3 8h6z" fill="#1030c0" />
      <path d="M398 660l14 7" stroke="#c02020" strokeWidth="2" />
      <path d="M419 670l-9-6-2 5z" fill="#c02020" />
      <circle cx="398" cy="660" r="3.500" fill="url(#ball)" />
      <g fontFamily="'Liberation Sans', sans-serif" fontSize="10">
        <text x="395" y="630" fill="#3a50e0">Z</text>
        <text x="425" y="655" fill="#3a9a3a">Y</text>
        <text x="419" y="675" fill="#d83030">X</text>
      </g>
    </g>

    <g>
      <path d="M1096 629l42 24v48l-42 23-42-23v-48z" fill="#fff" />
      <path d="M1096 632l39 22v46l-39 21-39-21v-46z" fill="#6fc6ee" />
      <path d="M1096 632L1057 654V700L1077 711L1076 664L1097 650L1119 664C1118 650 1110 640 1096 632Z" fill="#6b9dd3" />
      <path d="M1060 668c10-14 26-14 40-4" fill="none" stroke="#fff" strokeWidth=".7" opacity=".7" />
      <path d="M1097 652l22 12v24l-22 13-22-13v-24z" fill="#6b9dd3" stroke="#fff" strokeWidth="3.500" />
      <path d="M1097 677l19-11v21l-19 11z" fill="#6fc6ee" />
      <path d="M1097 677l-19-11 19-11 19 11z" fill="#6b9dd3" stroke="#fff" strokeWidth="1.200" />
      <path d="M1097 677v22" stroke="#fff" strokeWidth="1.200" />
      <text
        x="1147"
        y="686"
        fontFamily="'Liberation Sans', 'Noto Sans CJK SC', sans-serif"
        fontWeight="700"
        fontSize="44"
        fill="#6fc6ee"
        stroke="#fff"
        strokeWidth="2"
        paintOrder="stroke"
        textLength="198"
        lengthAdjust="spacingAndGlyphs"
      >
        3D世界网
      </text>
      <text
        x="1149"
        y="707"
        fontFamily="'Liberation Sans', sans-serif"
        fontWeight="700"
        fontSize="14"
        fill="#6fc6ee"
        stroke="#fff"
        strokeWidth="1.500"
        paintOrder="stroke"
        textLength="195"
      >
        WWW.3DSJW.COM
      </text>
    </g>
  </Scene>
);

const ErrorIcon = () => (
  <Svg width="32" height="32" viewBox="0 0 32 32">
    <defs>
      <radialGradient id="err" cx=".5" cy=".75" r=".8">
        <stop offset="0" stopColor="#e04848" />
        <stop offset=".55" stopColor="#b00808" />
        <stop offset="1" stopColor="#d85858" />
      </radialGradient>
    </defs>
    <circle cx="16" cy="16" r="15" fill="#f4f4f4" stroke="#8f8f8f" />
    <circle cx="16" cy="16" r="13" fill="url(#err)" />
    <path d="M10 10l12 12M22 10L10 22" stroke="#ececec" strokeWidth="4.200" strokeLinecap="round" />
  </Svg>
);

/* ---------- data ---------- */
const TABS = [
  ["主页", 52, true],
  ["结果", 52],
  ["曲线", 52],
  ["分析", 52],
  ["视图", 52],
  ["渲染", 52],
  ["工具", 52],
  ["应用模块", 78],
];

const Large = ({ n, w, ml, caret, children }) => (
  <LargeBtn $w={w} $ml={ml}>
    <Big n={n} />
    <span>{children}</span>
    {caret && <LargeCaret />}
  </LargeBtn>
);
const Small = ({ items, ml, gap }) => (
  <SmallCol $ml={ml}>
    {items.map(([n, t]) => (
      <SmallRow key={n} $gap={gap}>
        <Ico n={n} />
        {t && <span>{t}</span>}
      </SmallRow>
    ))}
  </SmallCol>
);
const RGroup = ({ w, label, trail, children }) => (
  <Group $w={w}>
    <GroupBody>{children}</GroupBody>
    <GroupFoot $trail={trail}>
      <GroupLabel>{label}</GroupLabel>
      <FootCaret />
    </GroupFoot>
  </Group>
);

const ROWS = Array.from({ length: 21 }, (_, i) => i);

export default function App() {
  return (
    <Page>
      <Global />
      <TitleRow>
        <Quick>
          <NxLogo>NX</NxLogo>
          <VSep />
          <Ico n="save" ml={9} />
          <VSep $ml={6} />
          <Ico n="undo" ml={6} />
          <Caret $ml={7} />
          <VSep $ml={4} />
          <Ico n="cut" ml={6} />
          <Ico n="copy" ml={8} />
          <Ico n="paste" ml={7} />
          <VSep $ml={5} />
          <Ico n="star" ml={6} />
          <Caret $ml={7} />
          <VSep $ml={4} />
          <Ico n="eraser" ml={6} />
          <VSep $ml={6} />
          <Ico n="wnd" ml={7} />
          <QuickText $ml={4}>窗口</QuickText>
          <Caret $ml={4} />
          <MenuCaret $ml={4} />
        </Quick>
        <Title>NX 10 - 运动仿真 - [_model1.prt （修改的）]</Title>
        <Siemens>SIEMENS</Siemens>
        <WinControls>
          <Ico n="minGrey" ml={23} />
          <Ico n="restore" ml={8} />
          <Ico n="close" ml={8} />
        </WinControls>
      </TitleRow>

      <TabBar>
        <FileTab>文件(F)</FileTab>
        {TABS.map(([t, w, active]) => (
          <Tab key={t} $w={w} $active={active}>{t}</Tab>
        ))}
        <SearchBox>
          <span>查找命令</span>
          <Ico n="loupe" />
        </SearchBox>
        <TabTools>
          <Ico n="frame" ml={11} />
          <Ico n="collapse" ml={10} />
          <Svg width="16" height="16" viewBox="0 0 16 16" $ml={11}>
            <circle cx="8" cy="8" r="6.500" fill="#3f6fd0" />
            <text x="8" y="12" textAnchor="middle" fontFamily="'Liberation Sans', sans-serif" fontWeight="700" fontSize="11" fill="#fff">?</text>
          </Svg>
          <Ico n="min" ml={4} />
          <Ico n="restore" ml={6} />
          <Ico n="closeOff" ml={7} />
        </TabTools>
      </TabBar>

      <Ribbon>
        <RGroup w={273} label="设置" trail={29}>
          <Large n="env" w={36}>环境</Large>
          <Large n="solve" w={56}>解算方案</Large>
          <Large n="link" w={40}>连杆</Large>
          <Large n="joint" w={40}>运动副</Large>
          <Large n="driver" w={42}>驱动体</Large>
          <Small ml={6} items={[["plusBulb"], ["axes"], ["ruler"]]} />
          <Small ml={10} items={[["nodes"], ["fx"], ["rod"]]} />
        </RGroup>
        <RGroup w={140} label="传动副">
          <Large n="gears" w={54}>齿轮副</Large>
          <Small items={[["rack", "齿轮齿条副"], ["cable", "线缆副"], ["couple", "2-3 传动副"]]} />
        </RGroup>
        <RGroup w={165} label="连接器">
          <Large n="spring" w={46} ml={5}>弹簧</Large>
          <Large n="damper" w={34}>阻尼器</Large>
          <Small ml={10} items={[["bushing", "衬套"], ["c3d", "3D 接触"], ["c2d", "2D 接触"]]} />
        </RGroup>
        <RGroup w={98} label="约束" trail={29}>
          <Small ml={11} items={[["ptLine", "点在线上副"], ["lineLine", "线在线上副"], ["ptFace", "点在面上副"]]} />
        </RGroup>
        <RGroup w={129} label="加载">
          <Large n="force" w={44} ml={6}>标量力</Large>
          <Small ml={1} gap={7} items={[["scalarT", "标量扭矩"], ["vecF", "矢量力"], ["vecT", "矢量扭矩"]]} />
        </RGroup>
        <RGroup w={165} label="控制">
          <Large n="pmdc" w={76} ml={8}>PMDC 电动机</Large>
          <Small ml={7} gap={3} items={[["signal", "信号图"], ["plantIn", "工厂输入"], ["plantOut", "工厂输出"]]} />
        </RGroup>
        <RGroup w={200} label="分析">
          <Large n="calc" w={40} ml={8}>求解</Large>
          <Small ml={5} items={[["overlap", "干涉"], ["measure", "测量"], ["trace", "追踪"]]} />
          <Large n="check" w={50} ml={6}>模型检查</Large>
          <Large n="anim" w={40} ml={2} caret>动画</Large>
        </RGroup>
        <RibbonRest>
          <Caret />
        </RibbonRest>
      </Ribbon>

      <Toolbar>
        <Ico n="menu" />
        <MenuLabel $ml={2}>菜单(<u>M</u>)</MenuLabel>
        <Caret $ml={4} />
        <VSep $ml={6} $h={22} />
        <Combo $w={132} $ml={10}>
          <span />
          <GreyCaret />
        </Combo>
        <Combo $w={140} $ml={9}>
          <span>整个装配</span>
          <GreyCaret />
        </Combo>
        <Ico n="asm" ml={11} />
        <Ico n="wrench" ml={8} />
        <Ico n="redFilter" ml={6} />
        <Caret $ml={6} />
        <Ico n="rot" ml={5} />
        <Ico n="chain" ml={11} />
        <Ico n="marquee" ml={9} />
        <Caret $ml={6} />
        <Ico n="wire" ml={8} />
        <Ico n="cubeSel" ml={8} />
        <VSep $ml={11} $h={22} />
        <Ico n="zoomBox" ml={11} />
        <Ico n="pan" ml={9} />
        <Ico n="rotate" ml={9} />
        <Ico n="fit" ml={10} />
        <Caret $ml={7} />
        <Ico n="shade" ml={6} />
        <Caret $ml={7} />
        <Ico n="cubeBlue" ml={8} />
        <Caret $ml={7} />
        <Ico n="views" ml={6} />
        <Caret $ml={7} />
        <VSep $ml={9} $h={22} />
        <EndCaret />
      </Toolbar>

      <Main>
        <Strip>
          <GearTab>
            <Svg width="16" height="16" viewBox="0 0 16 16" $ml={-3}>
              <circle cx="7" cy="8" r="4.500" fill="none" stroke="#555" strokeWidth="1.600" />
              <circle cx="7" cy="8" r="6" fill="none" stroke="#555" strokeWidth="1.600" strokeDasharray="2 2.700" />
            </Svg>
          </GearTab>
          <ActiveTab>
            <Strip1 />
          </ActiveTab>
          <StripList>
            <Strip2 />
            <Strip3 />
            <Strip4 />
            <Strip5 />
            <Strip6 />
            <Strip7 />
            <Strip8 />
            <Strip9 />
            <StripTools />
          </StripList>
        </Strip>

        <Panel>
          <PanelTitle>
            <span>运动导航器</span>
            <Ico n="maximize" size={14} />
          </PanelTitle>
          <TableBox>
            <Row $head>
              <Cell $head>名称</Cell>
              <Cell $head>状态</Cell>
              <Cell $head>环境</Cell>
            </Row>
            <Rows>
              {ROWS.map((i) => (
                <Row key={i} $shade={i % 2 === 1}>
                  <Cell $tree>
                    {i === 0 && (
                      <>
                        <Ico n="mech" />
                        <span>_model1</span>
                      </>
                    )}
                  </Cell>
                  <Cell />
                  <Cell />
                </Row>
              ))}
            </Rows>
            <HScroll>
              <Svg width="8" height="10" viewBox="0 0 8 10">
                <path d="M6 1L2 5l4 4" fill="none" stroke="#555" strokeWidth="2" />
              </Svg>
              <Thumb />
              <Svg width="8" height="10" viewBox="0 0 8 10">
                <path d="M2 1l4 4-4 4" fill="none" stroke="#555" strokeWidth="2" />
              </Svg>
            </HScroll>
          </TableBox>
          <Splitter />
          <Fold>
            <span>预览</span>
            <Ico n="chev" size={14} />
          </Fold>
          <Fold>
            <span>模态形状局部放大图</span>
            <Ico n="chev" size={14} />
          </Fold>
        </Panel>

        <Viewport>
          <Scene3D />
          <Dialog>
            <DialogHead>错误</DialogHead>
            <DialogBody>
              <ErrorIcon />
              <span>没有写权限</span>
            </DialogBody>
            <DialogFoot>
              <OkButton>
                <span>确定(<u>O</u>)</span>
              </OkButton>
            </DialogFoot>
          </Dialog>
        </Viewport>
      </Main>

      <StatusBar>
        <Ico n="frame" />
      </StatusBar>
    </Page>
  );
}
